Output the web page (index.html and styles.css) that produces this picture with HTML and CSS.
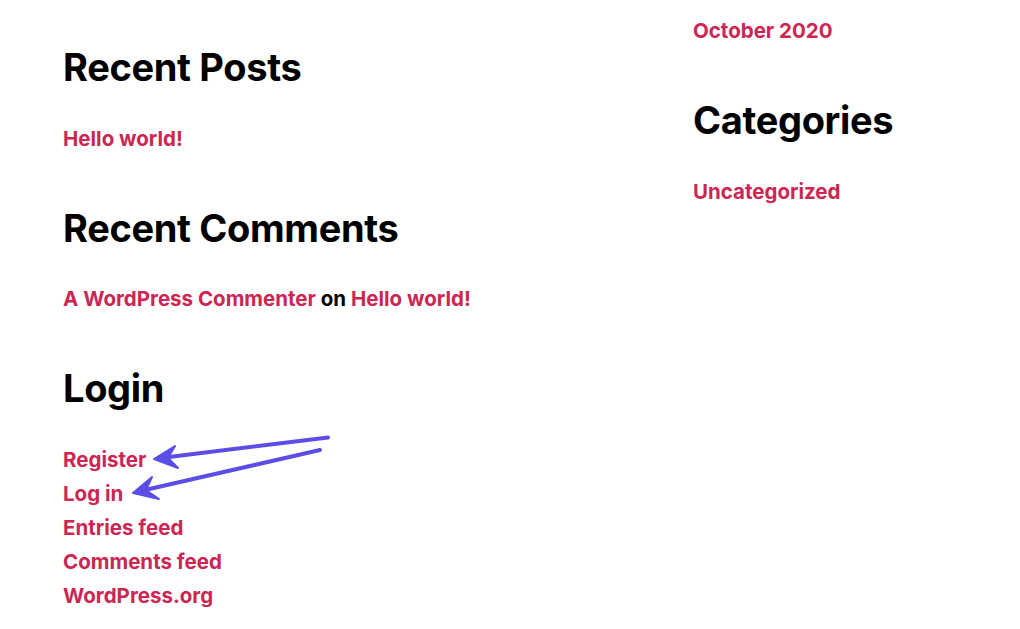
FILE: index.html
```html
<!DOCTYPE html>
<html lang="en">
<head>
<meta charset="utf-8">
<title>Widgets</title>
<link rel="stylesheet" href="styles.css">
</head>
<body>
<div class="page">
  <div class="col col-left">
    <section class="widget">
      <h2 class="widget-title">Recent Posts</h2>
      <ul class="widget-list">
        <li><a href="#">Hello world!</a></li>
      </ul>
    </section>
    <section class="widget">
      <h2 class="widget-title">Recent Comments</h2>
      <ul class="widget-list">
        <li><a href="#">A WordPress Commenter</a> on <a href="#">Hello world!</a></li>
      </ul>
    </section>
    <section class="widget">
      <h2 class="widget-title">Login</h2>
      <ul class="widget-list">
        <li><a href="#">Register</a></li>
        <li><a href="#">Log in</a></li>
        <li><a href="#">Entries feed</a></li>
        <li><a href="#">Comments feed</a></li>
        <li><a href="#">WordPress.org</a></li>
      </ul>
    </section>
  </div>
  <div class="col col-right">
    <section class="widget">
      <ul class="widget-list">
        <li><a href="#">October 2020</a></li>
      </ul>
    </section>
    <section class="widget">
      <h2 class="widget-title">Categories</h2>
      <ul class="widget-list">
        <li><a href="#">Uncategorized</a></li>
      </ul>
    </section>
  </div>
  <svg class="arrows" width="1020" height="629" viewBox="0 0 1020 629" aria-hidden="true">
    <g fill="#5a4ee6" stroke="#5a4ee6" stroke-width="4" stroke-linecap="round" stroke-linejoin="round">
      <line x1="328" y1="437.5" x2="165" y2="457.5"/>
      <path d="M154 459 L175 446 L168 458 L178 468 Z" stroke-width="2"/>
      <line x1="320" y1="450" x2="145" y2="490"/>
      <path d="M133 493 L152 477 L146 490 L159 499 Z" stroke-width="2"/>
    </g>
  </svg>
</div>
</body>
</html>
```
FILE: styles.css
```css
html, body {
  margin: 0;
  padding: 0;
  background: #ffffff;
}

body {
  font-family: Inter, "Noto Sans", "Liberation Sans", sans-serif;
  color: #000000;
}

.page {
  position: relative;
  width: 1020px;
  height: 629px;
  overflow: hidden;
  display: grid;
  grid-template-columns: 630px 1fr;
  padding-left: 63px;
  box-sizing: border-box;
}

.col-left {
  padding-top: 45px;
}

.col-right {
  padding-top: 14px;
}

.widget {
  margin-bottom: 50px;
}

.widget-title {
  margin: 0 0 31px;
  font-size: 38px;
  line-height: 1.2;
  font-weight: 700;
  letter-spacing: -0.009em;
}

.widget-list {
  list-style: none;
  margin: 0;
  padding: 0;
  font-size: 20.5px;
  line-height: 34px;
  font-weight: 700;
  letter-spacing: 0;
}

.widget-list a {
  color: #cd2653;
  text-decoration: none;
}

.arrows {
  position: absolute;
  left: 0;
  top: 0;
  pointer-events: none;
}
```
